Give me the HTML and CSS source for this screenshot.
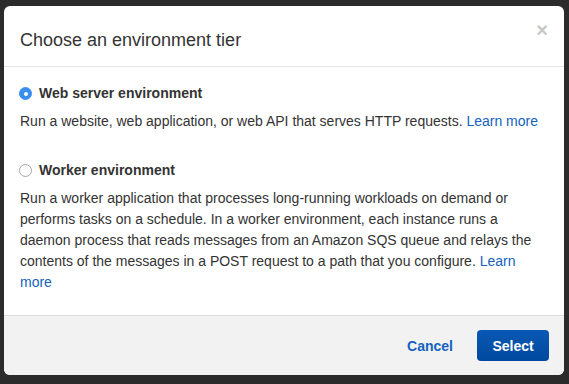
FILE: index.html
```html
<!DOCTYPE html>
<html lang="en">

<head>
    <meta charset="UTF-8">
    <meta name="viewport" content="width=device-width, initial-scale=1.0">
    <title>Choose an environment tier</title>
    <link rel="stylesheet" href="styles.css">
</head>

<body>

    <div class="modal">
        <div class="modal-header">
            <h2>Choose an environment tier</h2>
            <span class="close">&times;</span>
        </div>
        <div class="modal-body">
            <div class="option">
                <label class="option-label">
                    <span class="radio checked"></span>
                    Web server environment
                </label>
                <p>Run a website, web application, or web API that serves HTTP requests. <a href="#">Learn more</a></p>
            </div>
            <div class="option">
                <label class="option-label">
                    <span class="radio"></span>
                    Worker environment
                </label>
                <p>Run a worker application that processes long-running workloads on demand or performs tasks on a schedule. In a worker environment, each instance runs a daemon process that reads messages from an Amazon SQS queue and relays the contents of the messages in a POST request to a path that you configure. <a href="#">Learn more</a></p>
            </div>
        </div>
        <div class="modal-footer">
            <button class="btn-link">Cancel</button>
            <button class="btn-primary">Select</button>
        </div>
    </div>

</body>

</html>
```

FILE: styles.css
```css
body {
    font-family: 'Liberation Sans', Arial, Helvetica, sans-serif;
    background-color: #2b2b2b;
    margin: 0;
    padding: 6px 5px 9px 4px;
    color: #333;
}

.modal {
    width: 560px;
    background-color: #fff;
    border-radius: 6px;
    overflow: hidden;
}

.modal-header {
    display: flex;
    justify-content: space-between;
    align-items: flex-start;
    padding: 24px 16px 16px 16px;
    border-bottom: 1px solid #e5e5e5;
}

.modal-header h2 {
    margin: 0;
    font-size: 18px;
    font-weight: normal;
    line-height: 20px;
    color: #333;
}

.close {
    font-size: 20px;
    font-weight: bold;
    line-height: 20px;
    color: #c8c8c8;
    margin-top: -10px;
    cursor: pointer;
}

.modal-body {
    padding: 16px 16px 22px 16px;
    font-size: 14px;
    line-height: 21px;
}

.option + .option {
    margin-top: 28px;
}

.option-label {
    display: flex;
    align-items: center;
    gap: 7px;
    font-weight: bold;
    color: #333;
}

.radio {
    width: 13px;
    height: 13px;
    margin-left: -1px;
    box-sizing: border-box;
    border: 1px solid #a8a8a8;
    border-radius: 50%;
    background-color: #fff;
    position: relative;
}

.radio.checked {
    border-color: #3a8ef0;
    background-color: #3a8ef0;
}

.radio.checked::after {
    content: '';
    position: absolute;
    width: 4px;
    height: 4px;
    border-radius: 50%;
    background-color: #fff;
    top: 3.5px;
    left: 3.5px;
}

.option p {
    margin: 7px 0 0 0;
    color: #333;
}

.option a {
    color: #1462be;
    text-decoration: none;
}

.modal-footer {
    display: flex;
    justify-content: flex-end;
    align-items: center;
    gap: 24px;
    background-color: #f2f2f2;
    border-top: 1px solid #dcdcdc;
    padding: 14px 15px 14px 16px;
}

.modal-footer button {
    font-family: inherit;
    font-size: 14px;
    font-weight: bold;
    cursor: pointer;
    border: none;
}

.btn-link {
    background: none;
    color: #1462be;
    padding: 0;
}

.btn-primary {
    width: 72px;
    height: 31px;
    background: linear-gradient(#0a58b4, #004a9e);
    color: #fff;
    border-radius: 4px;
}
```
